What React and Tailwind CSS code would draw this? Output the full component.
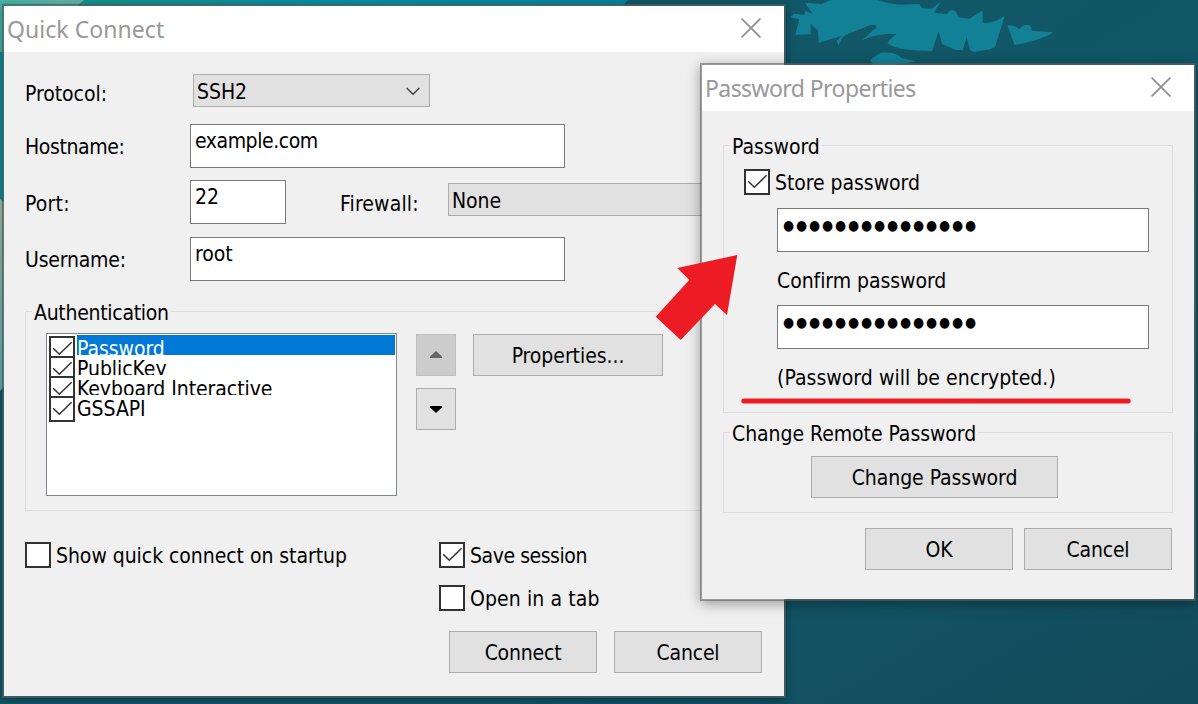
const AUTH_METHODS = ["Password", "PublicKey", "Keyboard Interactive", "GSSAPI"];

function CloseIcon() {
  return (
    <svg className="mb-[2px] block size-5" viewBox="0 0 20 20" fill="none" stroke="#8f8f8f" strokeWidth="1.7">
      <path d="M0.5 0.5 19.5 19.5M19.5 0.5 0.5 19.5" />
    </svg>
  );
}

function TitleBar({ children, tracking }) {
  return (
    <div className="flex h-[46px] items-center justify-between bg-white pr-[23px] pl-[3px]">
      <h1 className={"font-['Noto_Sans',sans-serif] text-[23px] leading-[30px] text-[#999999] " + tracking}>{children}</h1>
      <CloseIcon />
    </div>
  );
}

function Window({ className, title, tracking, children }) {
  return (
    <section
      className={
        "flex flex-col overflow-hidden border-2 bg-[#f0f0f0] bg-clip-padding " + className
      }
    >
      <TitleBar tracking={tracking}>{title}</TitleBar>
      {children}
    </section>
  );
}

function CheckBox({ checked }) {
  return (
    <span className="block size-[26px] shrink-0 border-2 border-[#333333] bg-white">
      {checked && (
        <svg className="block size-[22px]" viewBox="2 2 22 22" fill="none" stroke="#333333" strokeWidth="1.5">
          <path d="M4.2 12.3 10.3 18.3 22.6 6.3" />
        </svg>
      )}
    </span>
  );
}

function CheckRow({ checked, children, className = "" }) {
  return (
    <label className={"flex h-[26px] gap-[5px] " + className}>
      <CheckBox checked={checked} />
      <span className="mt-[2px]">{children}</span>
    </label>
  );
}

function Button({ className, children }) {
  return (
    <button className={"flex h-[42px] items-center justify-center border border-[#adadad] bg-[#e1e1e1] pt-px " + className}>
      {children}
    </button>
  );
}

function TextField({ className, children }) {
  return <div className={"h-11 border border-[#7a7a7a] bg-white pt-1 pl-[4px] " + className}>{children}</div>;
}

function Combo({ className, children }) {
  return (
    <div className={"flex h-[33px] justify-between border border-[#adadad] bg-[#e1e1e1] pt-[5px] pl-[3px] " + className}>
      <span>{children}</span>
      <svg className="mt-[6px] mr-[9px] h-[10px] w-[14px]" viewBox="0 0 14 10" fill="none" stroke="#404040" strokeWidth="1.4">
        <path d="M0.7 2 7 8.3 13.3 2" />
      </svg>
    </div>
  );
}

function Group({ title, className, legend = "", children }) {
  return (
    <div className={"border border-[#dcdcdc] " + className}>
      <h2 className={"-mt-[11px] ml-[6px] w-fit bg-[#f0f0f0] px-[2px] " + legend}>{title}</h2>
      {children}
    </div>
  );
}

function PasswordField() {
  return (
    <TextField className="ml-[53px] w-[372px]">
      <span className="block pl-px text-[14px] tracking-[2px]">●●●●●●●●●●●●●●●</span>
    </TextField>
  );
}

function Wallpaper() {
  return (
    <svg className="absolute inset-0 h-[704px] w-[1198px]" viewBox="0 0 1198 704">
      <defs>
        <linearGradient id="base" x1="0" y1="0" x2="1" y2="1">
          <stop offset="0" stopColor="#11586a" />
          <stop offset="0.7" stopColor="#125666" />
          <stop offset="1" stopColor="#124a5b" />
        </linearGradient>
        <linearGradient id="sky" x1="0" y1="0" x2="1" y2="0">
          <stop offset="0" stopColor="#149488" />
          <stop offset="0.3" stopColor="#128f94" />
          <stop offset="0.5" stopColor="#0890a4" />
          <stop offset="1" stopColor="#08829a" />
        </linearGradient>
        <linearGradient id="haze" x1="0" y1="0" x2="1" y2="0">
          <stop offset="0" stopColor="#45b5a4" />
          <stop offset="1" stopColor="#68b3a8" />
        </linearGradient>
        <linearGradient id="shore" x1="0" y1="0" x2="0" y2="1">
          <stop offset="0" stopColor="#a2bfa6" />
          <stop offset="1" stopColor="#62adb3" />
        </linearGradient>
      </defs>
      <rect width="1198" height="704" fill="url(#base)" />
      <path d="M0 0H628L616 12H0Z" fill="url(#sky)" />
      <rect width="5" height="202" fill="#0c8f94" />
      <path d="M0 0H84L70 12H5V52H0Z" fill="url(#haze)" />
      <path d="M0 199 5 203V386L0 391Z" fill="url(#shore)" />
      <g transform="translate(770 0) scale(0.33333)" fill="#128095">
        <path d="M105 8 155 12 182 0H322C355 10 378 14 392 14L448 12 455 24 485 26 512 5 492 38 530 42Q545 22 558 36L566 52 598 56 638 31 638 68Q668 72 704 48L675 142 660 148 612 156 600 150 590 112 578 150 558 150 516 132 506 94 486 153C430 152 380 150 352 130Q362 112 380 103 342 96 276 120L320 82Q320 70 300 76L228 104Q212 114 206 137L200 123 215 108 146 128 144 92 122 72 122 103 76 104 88 58 60 52 72 41 104 45 105 32 128 42Z" />
        <path d="M712 76Q735 75 748 88 758 71 780 76L786 92 848 97Q832 115 734 136Z" />
        <path d="M300 180 332 158Q380 156 394 174L440 184 374 195H312Z" />
      </g>
    </svg>
  );
}

export default function App() {
  return (
    <main className="relative h-[704px] w-[1198px] overflow-hidden font-['DejaVu_Sans_Condensed','DejaVu_Sans',sans-serif] text-[21px] leading-6 tracking-[-0.05px] whitespace-nowrap text-black">
      <Wallpaper />

      <Window
        title="Quick Connect"
        tracking="tracking-[0.05px]"
        className="absolute top-1 left-[2px] h-[694px] w-[784px] border-[#4a5f66]/70 shadow-[0_2px_8px_rgba(0,0,0,0.35)]"
      >
        <div className="pt-[22px] pl-[21px]">
          <div className="flex">
            <div className="w-[168px] pt-2">Protocol:</div>
            <Combo className="w-[237px]">SSH2</Combo>
          </div>
          <div className="mt-[17px] flex">
            <div className="w-[165px] pt-[11px] tracking-[-0.4px]">Hostname:</div>
            <TextField className="w-[375px] tracking-[-0.45px]">example.com</TextField>
          </div>
          <div className="mt-3 flex">
            <div className="w-[165px] pt-3 tracking-[0.2px]">Port:</div>
            <TextField className="w-24">22</TextField>
            <div className="ml-[54px] w-[108px] pt-3 tracking-[0.15px]">Firewall:</div>
            <Combo className="mt-[3px] w-[314px]">None</Combo>
          </div>
          <div className="mt-[13px] flex">
            <div className="w-[165px] pt-[11px] tracking-[-0.2px]">Username:</div>
            <TextField className="w-[375px]">root</TextField>
          </div>

          <Group title="Authentication" className="mt-[30px] h-[200px] w-[738px]" legend="tracking-[-0.28px]">
            <div className="mt-2 ml-5 flex">
              <div className="h-[163px] w-[351px] border border-[#828790] bg-white pt-px pl-[2px]">
                {AUTH_METHODS.map((name, i) => (
                  <div key={name} className="flex h-5 gap-[2px]">
                    <div className="pt-px">
                      <CheckBox checked />
                    </div>
                    <div
                      className={
                        "h-5 w-[318px] pt-[2px] " +
                        (i === 0 ? "bg-[#0078d7] text-white " : "") +
                        (i === 3 ? "" : "overflow-hidden")
                      }
                    >
                      {name}
                    </div>
                  </div>
                ))}
              </div>
              <div className="mt-px ml-[19px] flex flex-col gap-3">
                <button className="flex h-[42px] w-10 items-center justify-center border border-[#bfbfbf] bg-[#cccccc]">
                  <svg className="mr-px mb-px h-[7px] w-3" viewBox="0 0 12 7" fill="#666666">
                    <path d="M6 0 12 5.5V7H0V5.5Z" />
                  </svg>
                </button>
                <button className="flex h-[42px] w-10 items-center justify-center border border-[#adadad] bg-[#e1e1e1]">
                  <svg className="mr-px h-[7px] w-3" viewBox="0 0 12 7" fill="#000000">
                    <path d="M6 7 0 1.5V0H12V1.5Z" />
                  </svg>
                </button>
              </div>
              <Button className="mt-px ml-[17px] w-[190px]">Properties...</Button>
            </div>
          </Group>

          <div className="mt-[31px] flex">
            <CheckRow className="w-[414px]">Show quick connect on startup</CheckRow>
            <div className="flex flex-col gap-[17px]">
              <CheckRow checked className="tracking-[-0.45px]">Save session</CheckRow>
              <CheckRow className="tracking-[0.1px]">Open in a tab</CheckRow>
            </div>
          </div>
          <div className="mt-5 ml-[424px] flex gap-[17px]">
            <Button className="w-[148px] tracking-[-0.2px]">Connect</Button>
            <Button className="w-[148px] tracking-[-0.2px]">Cancel</Button>
          </div>
        </div>
      </Window>

      <Window
        title="Password Properties"
        tracking="tracking-[-0.58px]"
        className="absolute top-[63px] left-[700px] h-[538px] w-[496px] border-[#606060]/60 shadow-[0_3px_12px_rgba(0,0,0,0.35)]"
      >
        <div className="pt-[34px] pl-[21px]">
          <Group title="Password" className="h-[268px] w-[450px]">
            <CheckRow checked className="mt-[10px] ml-5">Store password</CheckRow>
            <div className="mt-[13px]">
              <PasswordField />
            </div>
            <p className="mt-[17px] mb-3 ml-[53px]">Confirm password</p>
            <PasswordField />
            <p className="mt-[17px] ml-[53px] tracking-[0.04px]">(Password will be encrypted.)</p>
          </Group>
          <Group title="Change Remote Password" className="mt-[19px] h-[81px] w-[450px]">
            <Button className="mt-[10px] ml-[87px] w-[247px]">Change Password</Button>
          </Group>
          <div className="mt-[15px] ml-[142px] flex gap-[11px]">
            <Button className="w-[148px]">OK</Button>
            <Button className="w-[148px] tracking-[-0.2px]">Cancel</Button>
          </div>
        </div>
      </Window>

      <svg className="pointer-events-none absolute top-[250px] left-[650px] h-[160px] w-[490px]" viewBox="650 250 490 160">
        <path d="M737.3 255 677.3 268 689.3 280 655.7 316.7 680.7 340 715 304 727 315Z" fill="#ed1c24" />
        <path d="M743.8 401H1128.2" stroke="#ed1c24" strokeWidth="5" strokeLinecap="round" />
      </svg>
    </main>
  );
}
